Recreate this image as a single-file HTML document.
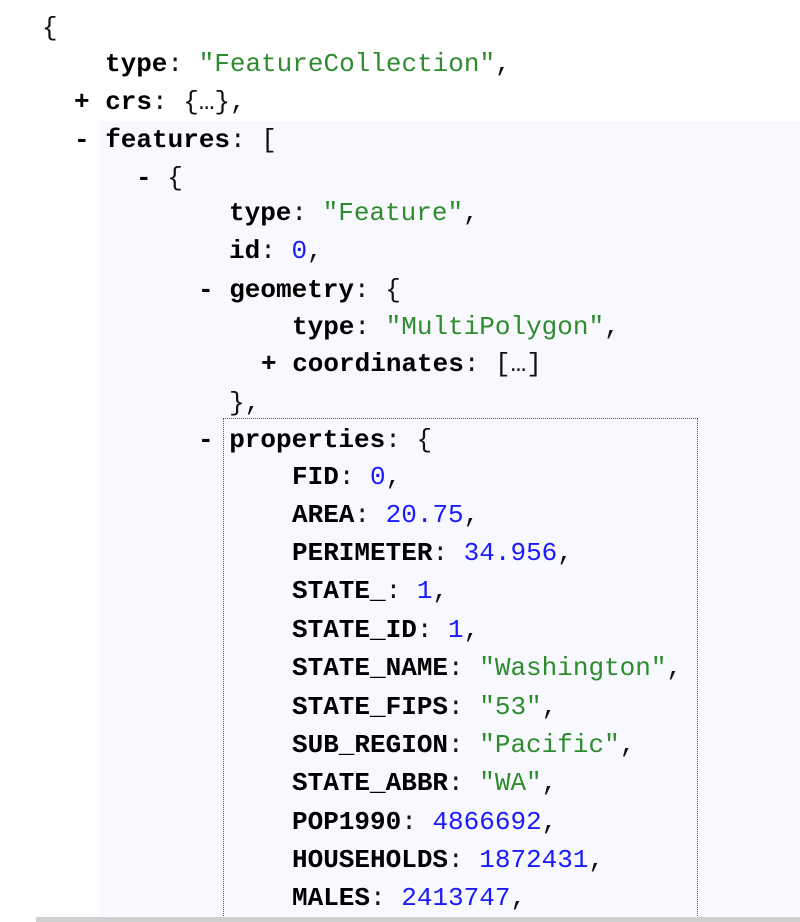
<!DOCTYPE html>
<html><head><style>
html,body{margin:0;width:800px;height:922px;overflow:hidden}
body{background:#fff;position:relative;font-family:"Liberation Mono","DejaVu Sans Mono",monospace;font-size:26px;color:#111}
.l{position:absolute;white-space:pre;line-height:38px;height:38px}
b{font-weight:bold;color:#000}
.s{color:#2e8b2e}
.n{color:#1a1aff}
#bg{position:absolute;left:100px;top:121px;width:700px;height:797px;background:#f8f9fe}
#box{position:absolute;left:223px;top:418px;width:473px;height:510px;border:1px dotted #555}
#bar{position:absolute;left:36px;top:917px;width:764px;height:5px;background:#cfcfcf}
</style></head><body>
<div id="bg"></div>
<div id="box"></div>
<div class="l" style="left:42px;top:9px">{</div>
<div class="l" style="left:105px;top:45px"><b>type</b>: <span class="s">"FeatureCollection"</span>,</div>
<div class="l" style="left:74px;top:83px"><b>+ crs</b>: {…},</div>
<div class="l" style="left:74px;top:121px"><b>- features</b>: [</div>
<div class="l" style="left:136px;top:159px"><b>-</b> {</div>
<div class="l" style="left:229px;top:194px"><b>type</b>: <span class="s">"Feature"</span>,</div>
<div class="l" style="left:229px;top:232px"><b>id</b>: <span class="n">0</span>,</div>
<div class="l" style="left:198px;top:271px"><b>- geometry</b>: {</div>
<div class="l" style="left:292px;top:308px"><b>type</b>: <span class="s">"MultiPolygon"</span>,</div>
<div class="l" style="left:261px;top:345px"><b>+ coordinates</b>: […]</div>
<div class="l" style="left:229px;top:384px">},</div>
<div class="l" style="left:198px;top:421px"><b>- properties</b>: {</div>
<div class="l" style="left:292px;top:458px"><b>FID</b>: <span class="n">0</span>,</div>
<div class="l" style="left:292px;top:496px"><b>AREA</b>: <span class="n">20.75</span>,</div>
<div class="l" style="left:292px;top:534px"><b>PERIMETER</b>: <span class="n">34.956</span>,</div>
<div class="l" style="left:292px;top:572px"><b>STATE_</b>: <span class="n">1</span>,</div>
<div class="l" style="left:292px;top:611px"><b>STATE_ID</b>: <span class="n">1</span>,</div>
<div class="l" style="left:292px;top:649px"><b>STATE_NAME</b>: <span class="s">"Washington"</span>,</div>
<div class="l" style="left:292px;top:688px"><b>STATE_FIPS</b>: <span class="s">"53"</span>,</div>
<div class="l" style="left:292px;top:726px"><b>SUB_REGION</b>: <span class="s">"Pacific"</span>,</div>
<div class="l" style="left:292px;top:764px"><b>STATE_ABBR</b>: <span class="s">"WA"</span>,</div>
<div class="l" style="left:292px;top:803px"><b>POP1990</b>: <span class="n">4866692</span>,</div>
<div class="l" style="left:292px;top:841px"><b>HOUSEHOLDS</b>: <span class="n">1872431</span>,</div>
<div class="l" style="left:292px;top:879px"><b>MALES</b>: <span class="n">2413747</span>,</div>
<div id="bar"></div>
</body></html>
